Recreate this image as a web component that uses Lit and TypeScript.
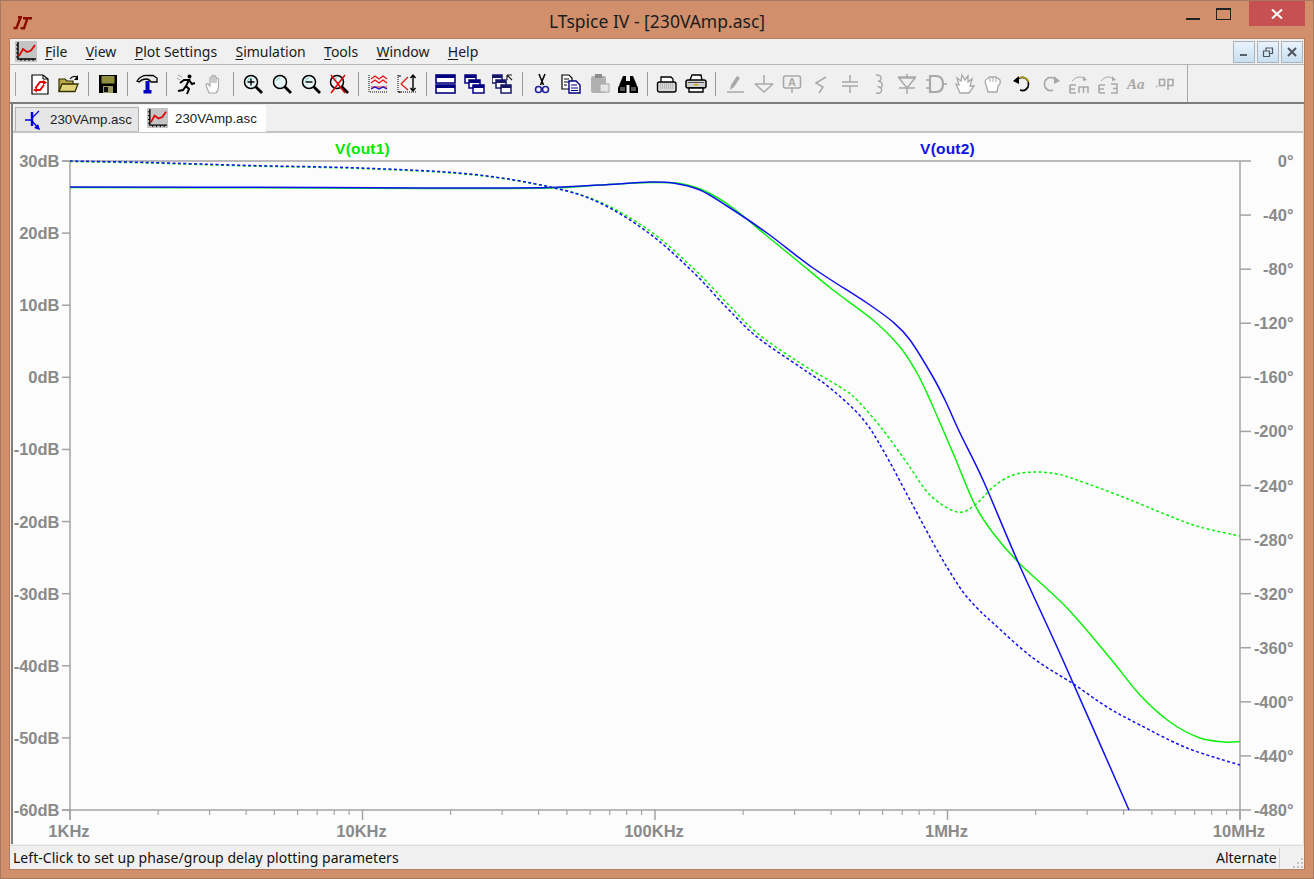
import { LitElement, html, css, svg } from "lit";
import { customElement } from "lit/decorators.js";

type P = [number, number];

const G = "#a8a8a8";
const NAVY = "#000080";

function spline(pts: P[]): string {
  let d = `M${pts[0][0]} ${pts[0][1]}`;
  for (let i = 0; i < pts.length - 1; i++) {
    const p0 = pts[Math.max(i - 1, 0)];
    const p1 = pts[i];
    const p2 = pts[i + 1];
    const p3 = pts[Math.min(i + 2, pts.length - 1)];
    const c1x = p1[0] + (p2[0] - p0[0]) / 6;
    const c1y = p1[1] + (p2[1] - p0[1]) / 6;
    const c2x = p2[0] - (p3[0] - p1[0]) / 6;
    const c2y = p2[1] - (p3[1] - p1[1]) / 6;
    d += `C${c1x.toFixed(1)} ${c1y.toFixed(1)} ${c2x.toFixed(1)} ${c2y.toFixed(1)} ${p2[0]} ${p2[1]}`;
  }
  return d;
}

const greenSolid: P[] = [[70, 187.5], [325, 188], [450, 188.5], [550, 188], [600, 185], [650, 182.5], [680, 183.5], [705, 191], [733, 208], [767, 236], [800, 263], [833, 290], [873, 320], [900, 347], [917, 373], [930, 400], [953, 453], [975, 505], [993, 533], [1018, 562], [1067, 608], [1110, 658], [1140, 695], [1170, 722], [1200, 738], [1225, 742], [1240, 741.5]];
const blueSolid: P[] = [[70, 187], [325, 187.5], [450, 188], [550, 187.5], [600, 185], [650, 182], [673, 183], [700, 190], [727, 206], [767, 233], [813, 268], [867, 303], [893, 322], [910, 340], [933, 377], [945, 400], [960, 433], [983, 480], [1018, 562], [1062, 658], [1129, 810]];
const greenDash: P[] = [[70, 161.5], [150, 163], [250, 166], [360, 168.5], [470, 174.5], [550, 187], [600, 202], [650, 231], [693, 268], [727, 303], [757, 333], [800, 363], [840, 387], [857, 400], [883, 430], [907, 463], [930, 495], [957, 512], [975, 505], [993, 487], [1013, 475], [1035, 472], [1057, 474], [1077, 480], [1123, 497], [1167, 515], [1200, 527], [1240, 536]];
const blueDash: P[] = [[70, 161], [150, 162.5], [250, 165.5], [360, 168], [470, 174], [550, 187], [600, 203], [650, 234], [693, 272], [727, 308], [757, 337], [800, 367], [830, 388], [862, 418], [883, 450], [910, 500], [937, 550], [950, 572], [963, 592], [977, 608], [993, 623], [1033, 658], [1075, 685], [1107, 707], [1140, 725], [1187, 748], [1240, 765]];

const X0 = 70, XW = 292.5, Y0 = 161, YB = 810;
const yLabels = ["30dB", "20dB", "10dB", "0dB", "-10dB", "-20dB", "-30dB", "-40dB", "-50dB", "-60dB"];
const rLabels = ["0°", "-40°", "-80°", "-120°", "-160°", "-200°", "-240°", "-280°", "-320°", "-360°", "-400°", "-440°", "-480°"];
const xLabels = ["1KHz", "10KHz", "100KHz", "1MHz", "10MHz"];

function plotChart() {
  const minor: number[] = [];
  for (let d = 0; d < 4; d++) for (let m = 2; m < 10; m++) minor.push(X0 + XW * (d + Math.log10(m)));
  return svg`
    <svg class="chart" viewBox="13 133 1290 712" width="1290" height="712">
      <path class="axis" d="M${X0} ${Y0}V820M${X0 + 4 * XW} ${Y0}V820M62 ${Y0}H${X0 + 4 * XW}M62 ${YB}H${X0 + 4 * XW}"/>
      ${yLabels.map((t, i) => {
        const y = Y0 + (i * (YB - Y0)) / 9;
        return svg`<path class="axis" d="M62 ${y}H70"/><text class="lbl" x="59.5" y="${y}" text-anchor="end">${t}</text>`;
      })}
      ${rLabels.map((t, i) => {
        const y = Y0 + (i * (YB - Y0)) / 12;
        return svg`<path class="axis" d="M1240 ${y}H1251"/><text class="lbl" x="1293.5" y="${y}" text-anchor="end">${t}</text>`;
      })}
      ${minor.map((x) => svg`<path class="axis thin" d="M${x.toFixed(1)} 810V815"/>`)}
      ${xLabels.map((t, i) => {
        const x = X0 + i * XW;
        return svg`<path class="axis" d="M${x} 810V820"/><text class="lbl" x="${x - 1}" y="831" text-anchor="middle">${t}</text>`;
      })}
      <text class="lbl tgreen" x="362.5" y="148" text-anchor="middle">V(out1)</text>
      <text class="lbl tblue" x="947.5" y="148" text-anchor="middle">V(out2)</text>
      <path class="tr g" d="${spline(greenSolid)}"/>
      <path class="tr b" d="${spline(blueSolid)}"/>
      <path class="tr g dash" d="${spline(greenDash)}"/>
      <path class="tr b dash" d="${spline(blueDash)}"/>
    </svg>`;
}

/* ---------- icons, 22x22 box ---------- */
const i22 = (c: unknown) => html`<svg class="ic" viewBox="0 0 22 22" width="22" height="22">${c}</svg>`;

const plotIcon = (sz = 22) => html`<svg class="ic" viewBox="0 0 22 22" width="${sz}" height="${sz}">
  <rect x="0" y="0" width="22" height="21" fill="#c4c4c4"/>
  <path d="M3 1V18H21" fill="none" stroke="#000" stroke-width="1.4"/>
  <path d="M1 4H3M1 8H3M1 12H3M1 16H3M6 18V20M10 18V20M14 18V20M18 18V20" stroke="#000" stroke-width="1"/>
  <path d="M4 15L8 8L12 11L16 9.5L20 4" fill="none" stroke="#e00000" stroke-width="1.8"/>
</svg>`;

const mag = (inner: unknown = svg``, extra: unknown = svg``) => i22(svg`
  <path d="M13 13L20 20" stroke="#000" stroke-width="2.8"/>
  <circle cx="9" cy="9" r="6.5" fill="#e6f6f6" stroke="#000" stroke-width="1.5"/>
  <path d="M5.5 8Q6 5.5 9 5" fill="none" stroke="#6cc" stroke-width="1"/>
  ${inner}${extra}`);

const win = (x: number, y: number, w: number, h: number, c = NAVY) => svg`
  <rect x="${x}" y="${y}" width="${w}" height="${h}" fill="#fff" stroke="${c}" stroke-width="1.5"/>
  <rect x="${x}" y="${y}" width="${w}" height="3" fill="${c}"/>`;

const gs = (d: string, w = 1.5) => svg`<path d="${d}" fill="none" stroke="${G}" stroke-width="${w}"/>`;

const toolbar: (unknown | null)[] = [
  i22(svg`<path d="M3 2H14L19 6V21H3Z" fill="#fff" stroke="#000" stroke-width="1.2"/><path d="M14 2V6H19" fill="none" stroke="#000"/>
    <path d="M6.5 15L11 9H15M15 12L11 17H6" fill="none" stroke="#e60000" stroke-width="2"/><path d="M14 7L18 9.5L14 12ZM8 14.5L4 17L8 19.5Z" fill="#e60000"/>`),
  i22(svg`<path d="M1 18V6H7L9 8H15V11" fill="#b8a848" stroke="#303000" stroke-width="1.2"/>
    <path d="M1 18.5L4 11H20L17 18.5Z" fill="#e2d27a" stroke="#303000" stroke-width="1.3"/>
    <path d="M12 6Q15 2 19 4" fill="none" stroke="#000" stroke-width="1.2"/><path d="M20 2V7H16Z" fill="#000"/>`),
  null,
  i22(svg`<rect x="2" y="2" width="18" height="18" fill="#000"/><rect x="4.5" y="3" width="13" height="7.5" fill="#8e8e3c"/>
    <rect x="6" y="13" width="10" height="7" fill="#9a9a60"/><rect x="7" y="14" width="4" height="5" fill="#111"/>`),
  null,
  i22(svg`<path d="M1 8Q5 2 12 2.5H17L21 5V9H15Q13 6 10 6Q6 6 3 9Z" fill="#e8e8e8" stroke="#000" stroke-width="1.3"/>
    <rect x="9.5" y="8" width="4" height="10" fill="#0000c0"/><rect x="7.5" y="17" width="8" height="3.5" fill="#0000c0"/>`),
  null,
  i22(svg`<circle cx="14.5" cy="3.5" r="2" fill="#000"/><path d="M5 10L9 7L14 7L11 13L14 16L12 21M11 13L8 17L3 18M14 7L17 11L20 10" fill="none" stroke="#000" stroke-width="2"/>
    <path d="M3 2L7 4M2 5L5 7" stroke="#999" stroke-width="1"/>`),
  i22(svg`<path d="M6 20L3 12Q3 10 5 11L7 13V5Q8 3 9 5V10V3Q10 1.5 11 3V10V3.5Q12.5 2 13 4V10V6Q14.5 4.5 15.5 6V14Q15 18 13 20Z" fill="#fff" stroke="${G}" stroke-width="1.2"/>`),
  null,
  mag(svg`<path d="M5.5 9H12.5M9 5.5V12.5" stroke="#000" stroke-width="1.4"/>`),
  mag(),
  mag(svg`<path d="M5.5 9H12.5" stroke="#000" stroke-width="1.4"/>`),
  mag(svg``, svg`<path d="M3 2L17 20M17 2L3 20" stroke="#e00000" stroke-width="1.5"/>`),
  null,
  i22(svg`<path d="M2 2V19H21" fill="none" stroke="#000" stroke-width="1" stroke-dasharray="1 1"/>
    <path d="M4 6L8 3L12 6L16 3L20 6M4 10L8 7L12 10L16 7L20 10" fill="none" stroke="#e01010" stroke-width="1.2"/>
    <path d="M4 14H20" stroke="#e01010" stroke-width="1"/><path d="M4 16L8 14L12 16L16 14L20 16" fill="none" stroke="#1010d0" stroke-width="1.3"/>`),
  i22(svg`<path d="M2 2V19H21" fill="none" stroke="#000" stroke-width="1" stroke-dasharray="1 1"/>
    <path d="M5 11L12 4M5 11L12 17" fill="none" stroke="#e01010" stroke-width="1.2"/><path d="M5 3H2M5 19H2" stroke="#000"/>
    <path d="M17 2V18M14.5 5L17 2L19.5 5M14.5 15L17 18L19.5 15" fill="none" stroke="#000" stroke-width="1.4"/>`),
  null,
  i22(svg`<rect x="1" y="2" width="19" height="8" fill="#fff" stroke="${NAVY}" stroke-width="1.6"/><rect x="1" y="2" width="19" height="3" fill="${NAVY}"/>
    <rect x="1" y="12" width="19" height="8" fill="#fff" stroke="${NAVY}" stroke-width="1.6"/><rect x="1" y="12" width="19" height="3" fill="${NAVY}"/>`),
  i22(svg`${win(1, 2, 11, 8)}${win(5, 7, 11, 8)}${win(9, 12, 11, 8)}`),
  i22(svg`${win(0, 2, 10, 8, "#181868")}${win(4, 7, 10, 8, "#181868")}${win(9, 12, 10, 8, "#181868")}<path d="M15 2H20M15 2V7M15 2L20 7" stroke="#222" stroke-width="1.2" fill="none"/>`),
  null,
  i22(svg`<path d="M8 1L12.5 12M14 1L9.5 12" stroke="#000" stroke-width="1.5"/>
    <circle cx="7.5" cy="16.5" r="3" fill="none" stroke="#20209c" stroke-width="1.6"/><circle cx="14.5" cy="16.5" r="3" fill="none" stroke="#20209c" stroke-width="1.6"/>`),
  i22(svg`<path d="M2 2H9L12 5V16H2Z" fill="#fff" stroke="#000" stroke-width="1.2"/><path d="M4 6H9M4 9H9M4 12H7" stroke="#000"/>
    <path d="M9 8H16L20 12V20H9Z" fill="#fff" stroke="${NAVY}" stroke-width="1.4"/><path d="M11 12H17M11 15H18M11 17.5H18" stroke="${NAVY}"/>`),
  i22(svg`<rect x="2" y="3" width="15" height="17" rx="2" fill="#b0b0b0"/><rect x="6" y="1" width="7" height="4" fill="#8c8c8c"/>
    <rect x="11" y="11" width="9" height="8" fill="#e4e4e4" stroke="${G}"/>`),
  i22(svg`<path d="M6 3H9V8H13V3H16L21 15V20H12.5V12H9.5V20H1V15Z" fill="#000"/><rect x="3" y="14" width="5" height="4" fill="#555"/><rect x="14" y="14" width="5" height="4" fill="#555"/>`),
  null,
  i22(svg`<path d="M5 9V4H15L17 6V9" fill="#fff" stroke="#000" stroke-width="1.3"/>
    <rect x="1.5" y="9" width="18.5" height="10" rx="2" fill="#d8d8d8" stroke="#000" stroke-width="1.4"/>
    <path d="M4 11H18M4 13H18M4 15H18" stroke="#999" stroke-dasharray="1 1"/>`),
  i22(svg`<path d="M5 7L7 2H16L17 7" fill="#fff" stroke="#000" stroke-width="1.4"/>
    <rect x="1" y="7" width="20" height="8" rx="2" fill="#cfcfcf" stroke="#000" stroke-width="1.5"/>
    <rect x="9" y="11" width="4" height="1.6" fill="#c8b400"/><path d="M4 15H18V19H4Z" fill="#fff" stroke="#000" stroke-width="1.4"/><path d="M3 9.5H19" stroke="#555"/>`),
  null,
  i22(svg`<path d="M6 17L7 12L13 3L16 5L10 14Z" fill="${G}"/>${gs("M3 19H20")}`),
  i22(svg`${gs("M11 2V11M2 11H20M2 11L11 19L20 11")}`),
  i22(svg`<rect x="2.5" y="3" width="17" height="12" rx="2" fill="none" stroke="${G}" stroke-width="1.6"/>${gs("M11 15V20")}<text class="ict" x="11" y="13" text-anchor="middle">A</text>`),
  i22(svg`${gs("M16 4L6 10L13 14L9 20")}`),
  i22(svg`${gs("M11 2V9M3 9H19M3 13H19M11 13V20")}`),
  i22(svg`${gs("M8 2Q14 2 13 6Q12 9 10 8Q15 9 14 13Q13 16 11 14Q15 15 13 19Q11 21 8 20")}`),
  i22(svg`${gs("M11 1V21M2 4H20")}<path d="M3 5H19L11 15Z" fill="#f0f0f0" stroke="${G}" stroke-width="1.5"/>${gs("M3 15H19")}`),
  i22(svg`<path d="M5 3H11Q18 3 18 11Q18 19 11 19H5ZM5 3V19" fill="none" stroke="${G}" stroke-width="2.2"/>${gs("M1 7H5M1 15H5M18 11H22")}`),
  i22(svg`<path d="M6 20L2 11L5 12L3 5L7 8L8 2L11 7L14 3L14 9L18 6L16 13L20 13L15 20Z" fill="#fff" stroke="${G}" stroke-width="1.3"/>`),
  i22(svg`<path d="M6 19L4 12Q2 7 5 6L8 4L11 4L14 4L18 7Q19 11 16 13L15 19Z" fill="#fff" stroke="${G}" stroke-width="1.3"/>${gs("M8 4V9M11 4V9M14 4V9", 1)}`),
  i22(svg`<path d="M6 7Q10 3 14 5Q19 8 17 14Q14 19 9 17" fill="none" stroke="#000" stroke-width="1.6"/><path d="M8 5Q11 3.6 14 5Q17 6.5 17.6 9" fill="none" stroke="#b0a000" stroke-width="1.6"/><path d="M2 8L8 3V11Z" fill="#000"/>`),
  i22(svg`<path d="M16 7Q12 3 8 5Q3 8 5 14Q8 19 13 17" fill="none" stroke="${G}" stroke-width="1.6"/><path d="M20 8L14 3V11Z" fill="${G}"/>`),
  i22(svg`<path d="M2 12H8M2 16H7M2 20H8M2 12V20" fill="none" stroke="${G}" stroke-width="1.6"/><path d="M11 20V14H20V20M15.5 14V20" fill="none" stroke="${G}" stroke-width="1.5"/><path d="M4 8Q10 1 17 6" fill="none" stroke="${G}"/><path d="M15 3L19 7L15 8Z" fill="${G}"/>`),
  i22(svg`<path d="M2 12H8M2 16H7M2 20H8M2 12V20" fill="none" stroke="${G}" stroke-width="1.6"/><path d="M14 11H20V20H14M16 15.5H20" fill="none" stroke="${G}" stroke-width="1.5"/><path d="M4 8Q10 1 17 6" fill="none" stroke="${G}"/><path d="M15 3L19 7L15 8Z" fill="${G}"/>`),
  i22(svg`<text class="ict aa" x="1" y="16">Aa</text>`),
  i22(svg`<path d="M2 13.5H3.5" stroke="${G}" stroke-width="1.6"/><rect x="5.5" y="6.5" width="5" height="6" fill="none" stroke="${G}" stroke-width="1.6"/><path d="M14 17V6.5H19V12.5H14" fill="none" stroke="${G}" stroke-width="1.6"/>`),
];

const transistor = html`<svg class="ic" viewBox="0 0 18 22" width="18" height="22">
  <path d="M9 3V17" stroke="#0000e0" stroke-width="2.4"/><path d="M2 11H9" stroke="#0000e0" stroke-width="1.5"/>
  <path d="M9 9L16 2M9 12L16 20" stroke="#0000e0" stroke-width="1.3"/><path d="M17 21L11 19L15 15Z" fill="#0000e0"/>
</svg>`;

@customElement("app-root")
export class AppRoot extends LitElement {
  static styles = css`
    :host {
      display: flex;
      flex-direction: column;
      width: 1314px;
      height: 879px;
      box-sizing: border-box;
      border: 1px solid #a67a5e;
      padding: 0 8px 8px;
      background: #d1906b;
      overflow: hidden;
      font-family: "Noto Sans", sans-serif;
      color: #111;
    }
    .titlebar {
      height: 37px;
      flex: none;
      display: grid;
      grid-template-columns: 1fr auto 1fr;
      margin: 0 -8px;
    }
    .logo { margin: 12px 0 0 12px; }
    .title {
      font-size: 17.5px;
      line-height: 41px;
      color: #1c1c1c;
    }
    .ctrls { display: flex; justify-content: flex-end; align-items: flex-start; margin-right: 8px; }
    .wbtn { width: 31px; height: 25px; display: flex; justify-content: center; }
    .wbtn.close { width: 56px; background: #c75050; margin-left: 10px; align-items: center; }
    .client {
      flex: 1;
      display: flex;
      flex-direction: column;
      border: 1px solid #b57d5e;
      background: #f0f0f0;
      min-height: 0;
    }
    .menubar {
      height: 26px;
      box-sizing: border-box;
      flex: none;
      border-bottom: 1px solid #b4b4b4;
      display: flex;
      align-items: center;
      padding-left: 5px;
      font-size: 14px;
    }
    .menuicon { width: 22px; height: 22px; margin-right: 8px; flex: none; }
    .mi { margin-right: 18.3px; white-space: nowrap; color: #1a1a1a; }
    .mdi { margin-left: auto; display: flex; gap: 2px; margin-right: 1px; }
    .mdib {
      width: 22px;
      height: 22px;
      box-sizing: border-box;
      border: 1px solid #a8b4c0;
      background: linear-gradient(#eaf3fb, #c9dff2);
      display: flex;
      align-items: center;
      justify-content: center;
    }
    .toolbar {
      height: 39px;
      box-sizing: border-box;
      flex: none;
      border-bottom: 2px solid #7c7c7c;
      display: flex;
      align-items: center;
      padding-left: 5px;
    }
    .grip { width: 1px; height: 24px; background: #a0a0a0; margin-right: 9.65px; flex: none; }
    .tb { width: 28.7px; flex: none; display: flex; justify-content: center; align-items: center; }
    .sep { width: 10.3px; flex: none; display: flex; justify-content: center; }
    .sep i { width: 1px; height: 24px; background: #9a9a9a; display: block; }
    .endsep { width: 1px; height: 37px; background: #a8a8a8; margin-left: 7.5px; flex: none; }
    .ic { display: block; flex: none; }
    .ict { fill: #a8a8a8; font-family: "Liberation Sans", sans-serif; font-weight: 700; font-size: 11px; }
    .ict.aa { font-family: "Liberation Serif", serif; font-style: italic; font-size: 15px; }
    .workspace {
      flex: 1;
      margin-left: 1px;
      border-left: 2px solid #808080;
      border-right: 1px solid #dcdcdc;
      display: flex;
      flex-direction: column;
      min-height: 0;
    }
    .tabs {
      height: 29px;
      box-sizing: border-box;
      flex: none;
      display: flex;
      align-items: flex-end;
      padding-left: 2px;
      border-bottom: 2px solid #c4c4c4;
    }
    .tab {
      display: flex;
      align-items: center;
      font-family: "Liberation Sans", sans-serif;
      font-size: 13.3px;
      color: #222;
      white-space: nowrap;
      box-sizing: border-box;
    }
    .tab.off {
      width: 124px;
      height: 24px;
      background: #e6e6e6;
      border: 1px solid #b0b0b0;
      border-bottom: none;
      padding-left: 7px;
      gap: 9px;
    }
    .tab.on {
      width: 127px;
      height: 27px;
      margin-bottom: -1px;
      background: #fff;
      padding-left: 8px;
      gap: 7px;
      position: relative;
    }
    .plot { flex: 1; background: #fcfcfc; min-height: 0; }
    .chart { display: block; }
    .axis { stroke: #a4a4a4; stroke-width: 1.5; fill: none; }
    .axis.thin { stroke-width: 1.2; }
    .lbl {
      font-family: "Liberation Sans", sans-serif;
      font-weight: 700;
      font-size: 16.5px;
      fill: #8a8a8a;
      dominant-baseline: central;
    }
    .tgreen { fill: #00e800; font-size: 15.5px; letter-spacing: 0.2px; }
    .tblue { fill: #1010e8; font-size: 15.5px; letter-spacing: 0.2px; }
    .tr { fill: none; stroke-width: 1.5; }
    .tr.g { stroke: #0cf00c; }
    .tr.b { stroke: #1010f0; }
    .tr.dash { stroke-width: 1.5; stroke-dasharray: 3 2.4; }
    .status {
      height: 24px;
      box-sizing: border-box;
      flex: none;
      border-top: 1px solid #dcdcdc;
      margin-top: 1px;
      display: flex;
      align-items: center;
      padding-left: 3px;
      font-size: 14px;
      letter-spacing: 0.035px;
      color: #111;
    }
    .st-main { flex: 1; white-space: nowrap; }
    .st-alt { width: 63px; height: 20px; line-height: 20px; border-right: 1px solid #d0d0d0; white-space: nowrap; letter-spacing: 0; }
    .st-grip { width: 24px; height: 100%; display: flex; align-items: flex-end; justify-content: flex-end; }
    u { text-underline-offset: 2px; text-decoration-thickness: 1px; }
  `;

  render() {
    return html`
      <div class="titlebar">
        <div class="logo">
          <svg width="20" height="14" viewBox="0 0 20 14">
            <path d="M5 1.2H9M7.5 1.2L3.5 12H0.5M10 2.2H19M14.5 2.2L11 12.3H7.5" fill="none" stroke="#8c0d00" stroke-width="2.5"/>
          </svg>
        </div>
        <div class="title">LTspice IV - [230VAmp.asc]</div>
        <div class="ctrls">
          <div class="wbtn"><svg width="14" height="25" viewBox="0 0 14 25"><rect y="17" width="14" height="2" fill="#222"/></svg></div>
          <div class="wbtn"><svg width="15" height="25" viewBox="0 0 15 25"><rect x="0.5" y="7.5" width="14" height="11" fill="none" stroke="#222"/><rect y="7" width="15" height="2" fill="#222"/></svg></div>
          <div class="wbtn close"><svg width="12" height="10" viewBox="0 0 12 10"><path d="M1 0.5L11 9.5M11 0.5L1 9.5" stroke="#fff" stroke-width="2"/></svg></div>
        </div>
      </div>
      <div class="client">
        <div class="menubar">
          <div class="menuicon">${plotIcon(22)}</div>
          <span class="mi"><u>F</u>ile</span>
          <span class="mi"><u>V</u>iew</span>
          <span class="mi"><u>P</u>lot Settings</span>
          <span class="mi"><u>S</u>imulation</span>
          <span class="mi"><u>T</u>ools</span>
          <span class="mi"><u>W</u>indow</span>
          <span class="mi"><u>H</u>elp</span>
          <div class="mdi">
            <div class="mdib"><svg width="12" height="12" viewBox="0 0 12 12"><rect x="2" y="8" width="7" height="2" fill="#56606c"/></svg></div>
            <div class="mdib"><svg width="12" height="12" viewBox="0 0 12 12"><path d="M1.5 5H7.5V10.5H1.5ZM4 5V2H10.5V7.5H7.5" fill="none" stroke="#4c5660" stroke-width="1.2"/></svg></div>
            <div class="mdib"><svg width="12" height="12" viewBox="0 0 12 12"><path d="M2 2L10 10M10 2L2 10" stroke="#4c5660" stroke-width="2"/></svg></div>
          </div>
        </div>
        <div class="toolbar">
          <div class="grip"></div>
          ${toolbar.map((t) => (t === null ? html`<div class="sep"><i></i></div>` : html`<div class="tb">${t}</div>`))}
          <div class="endsep"></div>
        </div>
        <div class="workspace">
          <div class="tabs">
            <div class="tab off">${transistor}<span>230VAmp.asc</span></div>
            <div class="tab on">${plotIcon(21)}<span>230VAmp.asc</span></div>
          </div>
          <div class="plot">${plotChart()}</div>
        </div>
        <div class="status">
          <div class="st-main">Left-Click to set up phase/group delay plotting parameters</div>
          <div class="st-alt">Alternate</div>
          <div class="st-grip">
            <svg width="12" height="12" viewBox="0 0 12 12"><path d="M9 1h2v2h-2zM5 5h2v2h-2zM9 5h2v2h-2zM1 9h2v2h-2zM5 9h2v2h-2zM9 9h2v2h-2z" fill="#c0c0c0"/></svg>
          </div>
        </div>
      </div>
    `;
  }
}
